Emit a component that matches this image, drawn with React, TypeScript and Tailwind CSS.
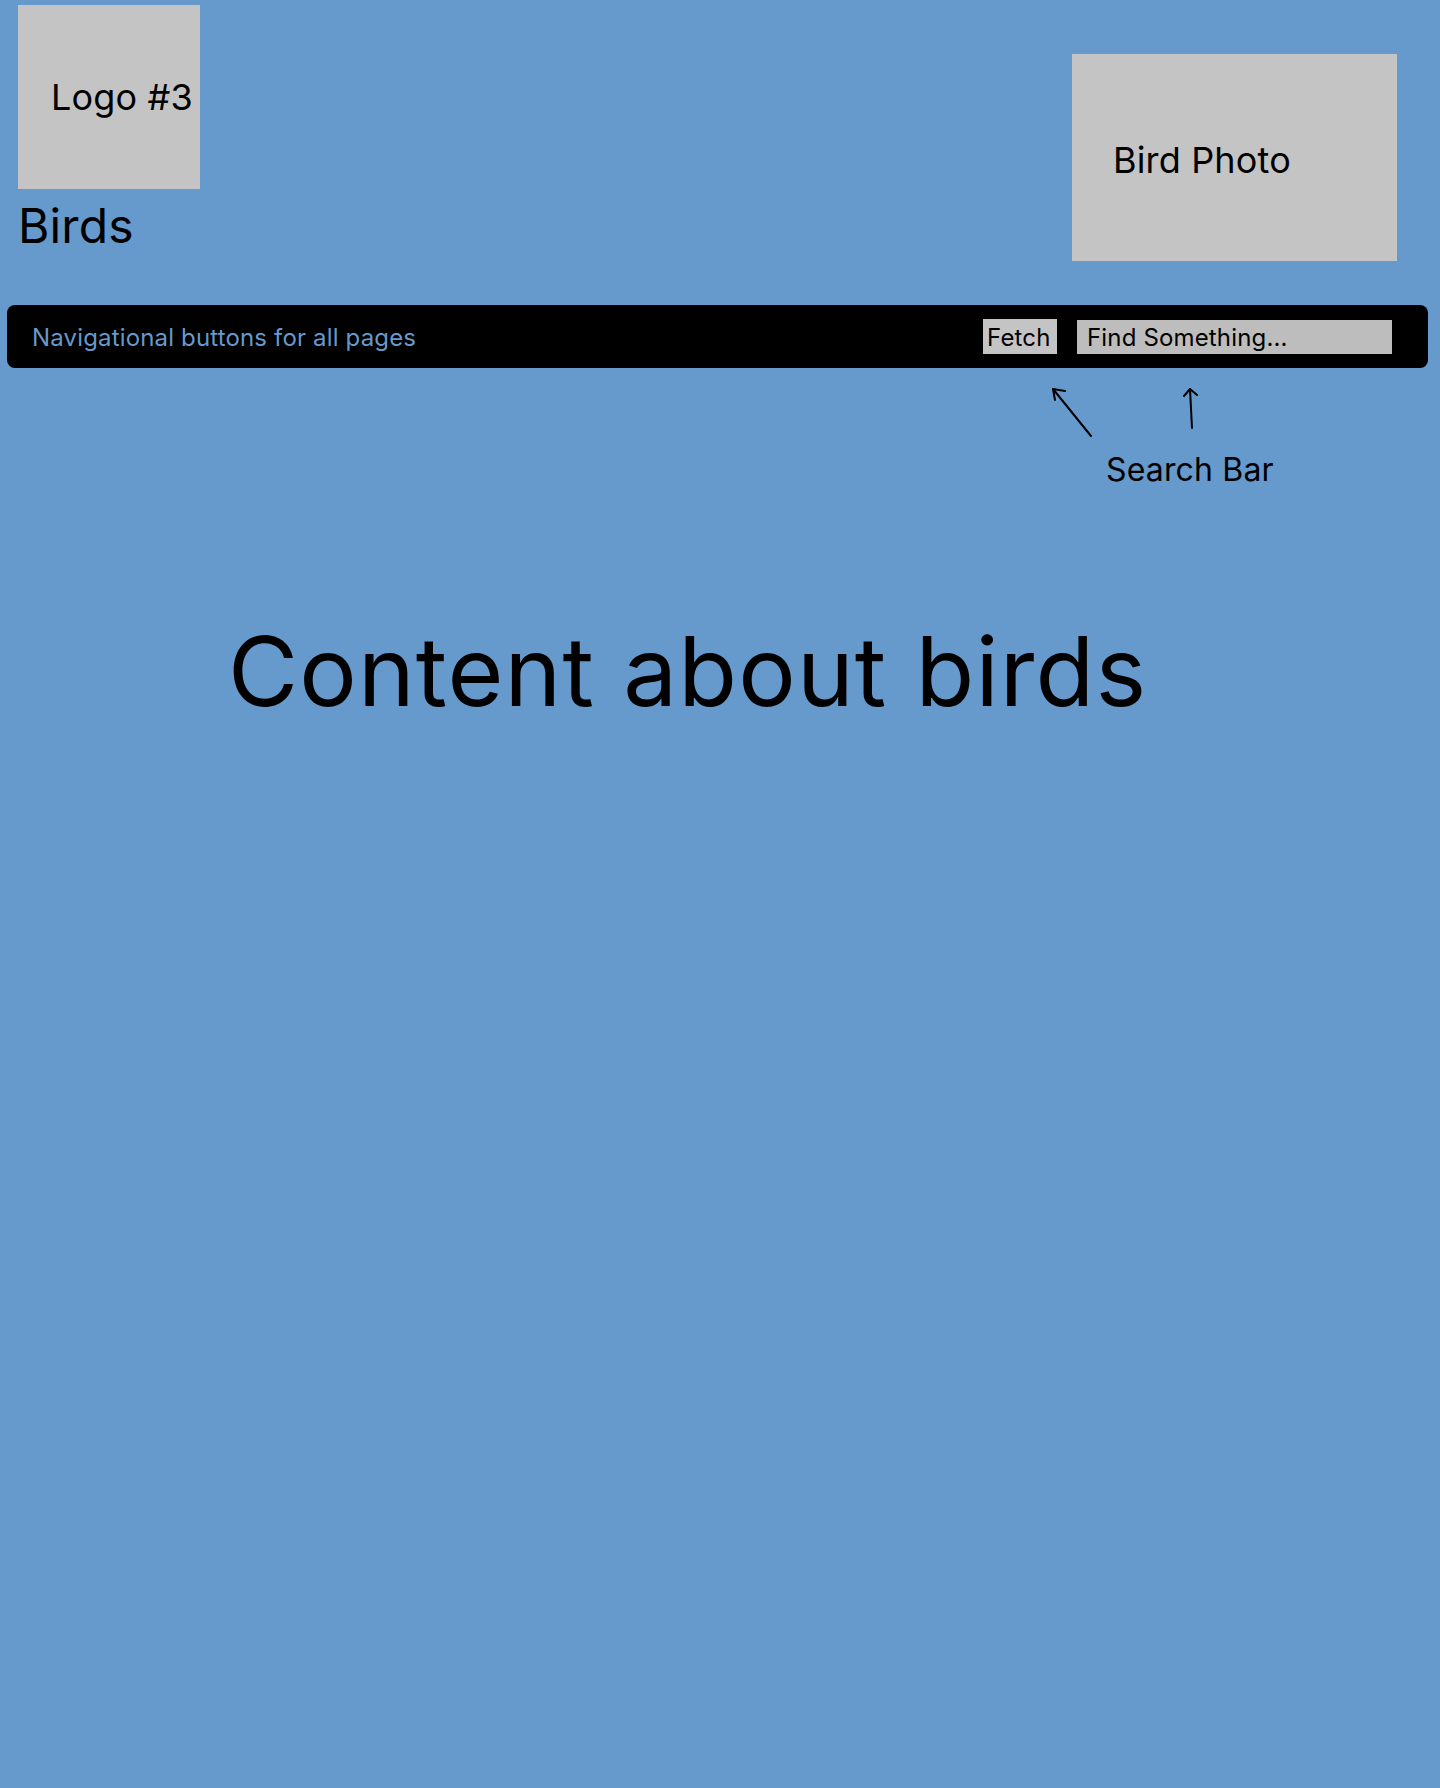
import React from "react";

export default function App() {
  return (
    <div
      className="min-h-[1788px] w-full bg-[#6699cc] tracking-[0.01em] text-black"
      style={{ fontFamily: "Inter, 'Noto Sans', sans-serif" }}
    >
      <header className="flex items-start justify-between">
        <div className="ml-[18px] mt-[5px] flex flex-col">
          <div className="h-[184px] w-[182px] bg-[#c4c4c4] pl-[33px] pt-[74px] text-[36px] leading-[36px]">
            Logo #3
          </div>
          <div className="mt-[13px] text-[48px] leading-[48px]">Birds</div>
        </div>
        <div className="mr-[43px] mt-[54px] h-[207px] w-[325px] bg-[#c4c4c4] pl-[41px] pt-[88px] text-[36px] leading-[36px]">
          Bird Photo
        </div>
      </header>

      <nav className="ml-[7px] mr-[12px] mt-[44px] flex h-[63px] items-center rounded-lg bg-black pl-[25px] pr-[36px]">
        <span className="mt-[2px] text-[24px] leading-[24px] text-[#6699cc]">
          Navigational buttons for all pages
        </span>
        <div className="ml-auto flex items-center gap-[20px]">
          <button className="h-[35px] w-[74px] bg-[#c4c4c4] pl-[4px] pt-[2px] text-left text-[24px] leading-[24px]">
            Fetch
          </button>
          <div className="flex h-[34px] w-[315px] items-center bg-[#bdbdbd] pl-[10px] pt-[2px] text-[24px] leading-[24px]">
            Find Something...
          </div>
        </div>
      </nav>

      <div className="ml-[1040px] mt-[12px] flex flex-col">
        <svg width="170" height="60" viewBox="0 0 170 60" className="block">
          <g stroke="black" strokeWidth="2" fill="none" strokeLinecap="round">
            <line x1="51" y1="56" x2="13" y2="9" />
            <line x1="13" y1="9" x2="25" y2="11" />
            <line x1="13" y1="9" x2="15" y2="20" />
            <line x1="152" y1="48" x2="150" y2="9" />
            <line x1="150" y1="9" x2="144" y2="16" />
            <line x1="150" y1="9" x2="157" y2="15" />
          </g>
        </svg>
        <div className="ml-[66px] mt-[14px] text-[32px] leading-[32px]">Search Bar</div>
      </div>

      <h1 className="ml-[228px] mt-[137px] text-[96px] font-normal leading-[96px] tracking-[0.012em]">
        Content about birds
      </h1>
    </div>
  );
}
